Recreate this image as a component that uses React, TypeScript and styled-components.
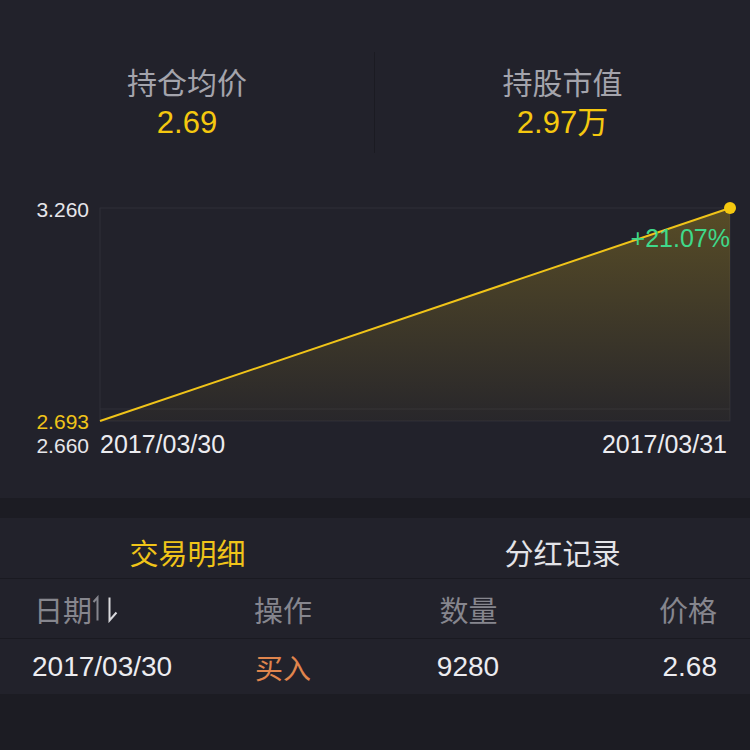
import React from "react";
import styled, { createGlobalStyle } from "styled-components";

const FONT = `"Liberation Sans", "Noto Sans CJK SC", sans-serif`;

const GlobalStyle = createGlobalStyle`
   html, body {
      margin: 0;
      padding: 0;
      background: #1c1c23;
      font-family: ${FONT};
   }
`;

interface StatProps {
   title: string;
   value: string;
}

interface TradeRow {
   date: string;
   action: string;
   amount: string;
   price: string;
}

const stats: StatProps[] = [
   { title: "持仓均价", value: "2.69" },
   { title: "持股市值", value: "2.97万" },
];

const trades: TradeRow[] = [
   { date: "2017/03/30", action: "买入", amount: "9280", price: "2.68" },
];

// chart geometry (svg coords, svg starts at page y=153)
const PLOT = { left: 100, right: 730, top: 55, bottom: 268 };

const PriceChart = () => {
   const { left, right, top, bottom } = PLOT;
   return (
      <ChartSvg width={750} height={345} viewBox="0 0 750 345">
         <defs>
            <linearGradient id="area" x1="0" y1="0" x2="0" y2="1">
               <stop offset="0%" stopColor="#f0c419" stopOpacity={0.26} />
               <stop offset="100%" stopColor="#f0c419" stopOpacity={0.03} />
            </linearGradient>
         </defs>
         <rect
            x={left}
            y={top}
            width={right - left}
            height={bottom - top}
            fill="none"
            stroke="#2f2f39"
            strokeWidth={1}
         />
         <line x1={left} y1={256} x2={right} y2={256} stroke="#2f2f39" />
         <polygon
            points={`${left},${bottom} ${right},${top} ${right},${bottom}`}
            fill="url(#area)"
         />
         <line
            x1={left}
            y1={bottom}
            x2={right}
            y2={top}
            stroke="#f0c419"
            strokeWidth={2}
         />
         <circle cx={right} cy={top} r={6} fill="#f5c80f" />
         <AxisText x={89} y={64} textAnchor="end" fill="#e6e6ea" fontSize={21}>
            3.260
         </AxisText>
         <AxisText x={89} y={276} textAnchor="end" fill="#f0c419" fontSize={21}>
            2.693
         </AxisText>
         <AxisText x={89} y={300} textAnchor="end" fill="#e6e6ea" fontSize={21}>
            2.660
         </AxisText>
         <AxisText x={100} y={300} fill="#ececf0" fontSize={25}>
            2017/03/30
         </AxisText>
         <AxisText x={727} y={300} textAnchor="end" fill="#ececf0" fontSize={25}>
            2017/03/31
         </AxisText>
         <AxisText x={730} y={94} textAnchor="end" fill="#3fd98a" fontSize={25}>
            +21.07%
         </AxisText>
      </ChartSvg>
   );
};

// up harpoon (gray) + down harpoon (light), as in the sort toggle
const SortIcon = () => (
   <SortSvg width="26" height="28" viewBox="0 0 26 28">
      <path d="M1.5 7 L5.5 2.5 V25.5" fill="none" stroke="#86868e" strokeWidth={2} />
      <path d="M17.5 2.5 V25.5 L24.5 17.5" fill="none" stroke="#d8d8dc" strokeWidth={2} />
   </SortSvg>
);

export default function App() {
   return (
      <Page>
         <GlobalStyle />
         <TopPanel>
            <StatsRow>
               {stats.map((item) => (
                  <StatCell key={item.title}>
                     <StatTitle>{item.title}</StatTitle>
                     <StatValue>{item.value}</StatValue>
                  </StatCell>
               ))}
            </StatsRow>
            <PriceChart />
         </TopPanel>

         <Tabs>
            <Tab $active>交易明细</Tab>
            <Tab>分红记录</Tab>
         </Tabs>

         <TableRow $header>
            <HeaderCell>
               日期
               <SortIcon />
            </HeaderCell>
            <HeaderCell>操作</HeaderCell>
            <HeaderCell $align="center">数量</HeaderCell>
            <HeaderCell $align="right">价格</HeaderCell>
         </TableRow>
         {trades.map((row) => (
            <TableRow key={row.date}>
               <DataCell $shift={-1}>{row.date}</DataCell>
               <DataCell $color="#e0854d" $shift={2}>
                  {row.action}
               </DataCell>
               <DataCell $align="center">{row.amount}</DataCell>
               <DataCell $align="right">{row.price}</DataCell>
            </TableRow>
         ))}
      </Page>
   );
}

const Page = styled.div`
   width: 750px;
   min-height: 750px;
   background: #1c1c23;
   font-family: ${FONT};
`;

const TopPanel = styled.section`
   height: 498px;
   background: #22222b;
   display: flex;
   flex-direction: column;
   padding-top: 52px;
   box-sizing: border-box;
`;

const StatsRow = styled.div`
   display: grid;
   grid-template-columns: 1fr 1fr;
   height: 101px;
`;

const StatCell = styled.div`
   display: flex;
   flex-direction: column;
   align-items: center;
   justify-content: center;
   gap: 3px;
   &:first-child {
      border-right: 1px solid #1b1b22;
   }
`;

const StatTitle = styled.span`
   font-size: 30px;
   line-height: 36px;
   color: #a4a4ac;
`;

const StatValue = styled.span`
   font-size: 31px;
   line-height: 35px;
   color: #f5c80f;
`;

const ChartSvg = styled.svg`
   display: block;
   font-family: ${FONT};
`;

const AxisText = styled.text`
   font-family: ${FONT};
`;

const Tabs = styled.div`
   margin-top: 20px;
   height: 60px;
   display: grid;
   grid-template-columns: 1fr 1fr;
   background: #22222b;
   border-bottom: 1px solid #1a1a21;
`;

const Tab = styled.div<{ $active?: boolean }>`
   display: flex;
   align-items: center;
   justify-content: center;
   padding-top: 8px;
   font-size: 29px;
   color: ${(p) => (p.$active ? "#f0c419" : "#e4e4e8")};
`;

const TableRow = styled.div<{ $header?: boolean }>`
   display: grid;
   grid-template-columns: 220px 120px 190px 1fr;
   align-items: center;
   padding: 0 33px;
   height: ${(p) => (p.$header ? "59px" : "55px")};
   background: #22222b;
   border-bottom: ${(p) => (p.$header ? "1px solid #1a1a21" : "none")};
`;

const HeaderCell = styled.div<{ $align?: string }>`
   display: flex;
   align-items: center;
   justify-content: ${(p) =>
      p.$align === "center" ? "center" : p.$align === "right" ? "flex-end" : "flex-start"};
   font-size: 29px;
   color: #86868e;
   margin-left: 1px;
`;

const SortSvg = styled.svg`
   margin-left: 0;
`;

const DataCell = styled.div<{ $align?: string; $color?: string; $shift?: number }>`
   text-align: ${(p) => p.$align || "left"};
   font-size: 28px;
   color: ${(p) => p.$color || "#ececf0"};
   margin-left: ${(p) => p.$shift || 0}px;
`;
